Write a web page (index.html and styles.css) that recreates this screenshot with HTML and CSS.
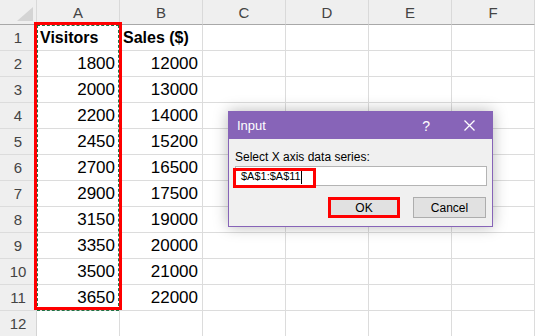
FILE: index.html
```html
<!DOCTYPE html>
<html lang="en">
<head>
    <meta charset="UTF-8">
    <title>Input - Select X axis</title>
    <link rel="stylesheet" href="styles.css">
</head>
<body>
    <div class="sheet">
        <!-- Column headers -->
        <div class="hd corner">
            <svg width="16" height="14" viewBox="0 0 16 14"><polygon points="16,0 16,14 0,14" fill="#d4d4d4"/></svg>
        </div>
        <div class="hd col">A</div>
        <div class="hd col">B</div>
        <div class="hd col">C</div>
        <div class="hd col">D</div>
        <div class="hd col">E</div>
        <div class="hd col">F</div>

        <div class="hd row">1</div><div class="cell bold">Visitors</div><div class="cell bold">Sales ($)</div><div class="cell"></div><div class="cell"></div><div class="cell"></div><div class="cell"></div>
        <div class="hd row">2</div><div class="cell num">1800</div><div class="cell num">12000</div><div class="cell"></div><div class="cell"></div><div class="cell"></div><div class="cell"></div>
        <div class="hd row">3</div><div class="cell num">2000</div><div class="cell num">13000</div><div class="cell"></div><div class="cell"></div><div class="cell"></div><div class="cell"></div>
        <div class="hd row">4</div><div class="cell num">2200</div><div class="cell num">14000</div><div class="cell"></div><div class="cell"></div><div class="cell"></div><div class="cell"></div>
        <div class="hd row">5</div><div class="cell num">2450</div><div class="cell num">15200</div><div class="cell"></div><div class="cell"></div><div class="cell"></div><div class="cell"></div>
        <div class="hd row">6</div><div class="cell num">2700</div><div class="cell num">16500</div><div class="cell"></div><div class="cell"></div><div class="cell"></div><div class="cell"></div>
        <div class="hd row">7</div><div class="cell num">2900</div><div class="cell num">17500</div><div class="cell"></div><div class="cell"></div><div class="cell"></div><div class="cell"></div>
        <div class="hd row">8</div><div class="cell num">3150</div><div class="cell num">19000</div><div class="cell"></div><div class="cell"></div><div class="cell"></div><div class="cell"></div>
        <div class="hd row">9</div><div class="cell num">3350</div><div class="cell num">20000</div><div class="cell"></div><div class="cell"></div><div class="cell"></div><div class="cell"></div>
        <div class="hd row">10</div><div class="cell num">3500</div><div class="cell num">21000</div><div class="cell"></div><div class="cell"></div><div class="cell"></div><div class="cell"></div>
        <div class="hd row">11</div><div class="cell num">3650</div><div class="cell num">22000</div><div class="cell"></div><div class="cell"></div><div class="cell"></div><div class="cell"></div>
        <div class="hd row">12</div><div class="cell"></div><div class="cell"></div><div class="cell"></div><div class="cell"></div><div class="cell"></div><div class="cell"></div>
    </div>

    <!-- Copy selection and highlight over column A -->
    <div class="ants"></div>
    <div class="mark-col"></div>

    <!-- Input dialog -->
    <div class="dialog">
        <div class="dialog-title">
            <span class="title-text">Input</span>
            <span class="title-help">?</span>
            <svg class="title-close" width="11" height="11" viewBox="0 0 11 11">
                <path d="M0.5 0.5 L10.5 10.5 M10.5 0.5 L0.5 10.5" stroke="#fff" stroke-width="1.3"/>
            </svg>
        </div>
        <div class="dialog-body">
            <label for="range">Select X axis data series:</label>
            <div class="field">
                <div class="text-input" id="range">$A$1:$A$11<span class="caret"></span></div>
                <span class="mark-text"></span>
            </div>
            <div class="buttons">
                <button class="btn marked">OK</button>
                <button class="btn">Cancel</button>
            </div>
        </div>
    </div>
</body>
</html>
```

FILE: styles.css
```css
body {
    margin: 0;
    width: 536px;
    height: 336px;
    overflow: hidden;
    background-color: white;
    font-family: "Liberation Sans", Arial, sans-serif;
    position: relative;
}
.sheet {
    display: grid;
    grid-template-columns: 37px repeat(6, 83px);
    grid-template-rows: 25px repeat(12, 26px);
}
.hd {
    background-color: #efefef;
    color: #444;
    font-size: 15px;
    display: flex;
    align-items: center;
    justify-content: center;
    box-sizing: border-box;
}
.hd.col, .corner {
    border-right: 1px solid #d9d9d9;
    border-bottom: 1px solid #a8a8a8;
}
.corner {
    align-items: flex-end;
    justify-content: flex-end;
    padding: 0 3px 3px 0;
}
.hd.row {
    border-right: 1px solid #d4d4d4;
    border-bottom: 1px solid #dcdcdc;
}
.cell {
    box-sizing: border-box;
    border-right: 1px solid #dcdcdc;
    border-bottom: 1px solid #dcdcdc;
    display: flex;
    align-items: center;
    padding: 0 4px 0 3px;
    color: #000;
    font-size: 17px;
}
.cell.bold {
    font-weight: bold;
    font-size: 16px;
}
.cell.num {
    justify-content: flex-end;
}
.ants {
    position: absolute;
    left: 37px;
    top: 25px;
    width: 82px;
    height: 286px;
    box-sizing: border-box;
    border: 1px dashed #217346;
}
.mark-col {
    position: absolute;
    left: 34px;
    top: 22px;
    width: 88px;
    height: 288px;
    box-sizing: border-box;
    border: 3px solid #ff0000;
}
.dialog {
    position: absolute;
    left: 228px;
    top: 111px;
    width: 265px;
    box-sizing: border-box;
    border: 1px solid #8764b8;
    background-color: #f0f0f0;
    box-shadow: 0 0 14px rgba(0,0,0,0.28);
    font-size: 12px;
    color: #000;
}
.dialog-title {
    background-color: #8764b8;
    color: white;
    height: 27px;
    display: flex;
    align-items: center;
    padding: 0 17px 0 8px;
    font-size: 13px;
}
.title-text {
    flex: 1;
}
.title-help {
    font-size: 14px;
    margin-right: 34px;
}
.dialog-body {
    padding: 11px 5px 8px 6px;
}
label {
    display: block;
    margin-bottom: 2px;
}
.field {
    position: relative;
}
.text-input {
    height: 20px;
    box-sizing: border-box;
    border: 1px solid #b4b4b4;
    background-color: white;
    font-size: 11px;
    display: flex;
    align-items: center;
    padding-left: 5px;
}
.caret {
    display: inline-block;
    width: 1px;
    height: 15px;
    background-color: #000;
}
.mark-text {
    position: absolute;
    left: -2px;
    top: 2px;
    width: 83px;
    height: 20px;
    box-sizing: border-box;
    border: 3px solid #ff0000;
}
.buttons {
    display: flex;
    justify-content: flex-end;
    gap: 13px;
    margin-top: 11px;
    padding-right: 1px;
}
.btn {
    width: 73px;
    height: 21px;
    box-sizing: border-box;
    border: 1px solid #adadad;
    background-color: #e1e1e1;
    font-family: "Liberation Sans", Arial, sans-serif;
    font-size: 12px;
    color: #000;
    padding: 0;
}
.btn.marked {
    width: 72px;
    border: 3px solid #ff0000;
}
```
